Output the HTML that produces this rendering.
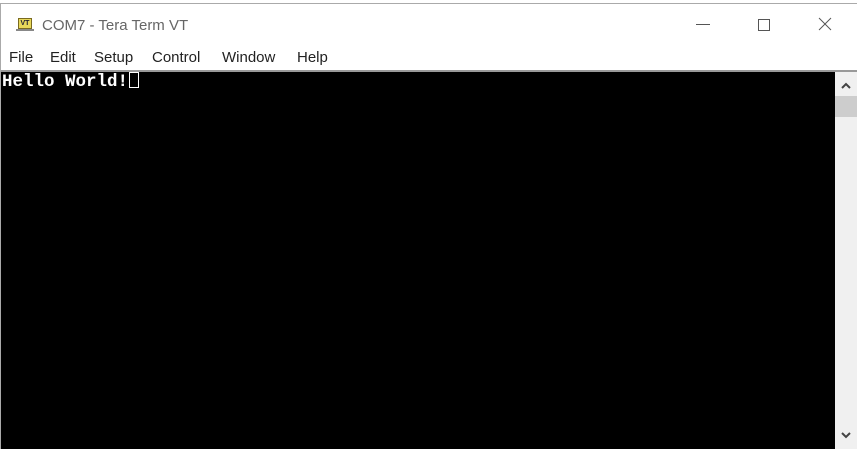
<!DOCTYPE html>
<html><head><style>
body{margin:0;width:857px;height:449px;background:#fff;position:relative;overflow:hidden;font-family:"Liberation Sans",sans-serif;}
.frame{position:absolute;left:0;top:3px;width:857px;height:446px;border-top:1px solid #aaa;border-left:1px solid #aaa;box-sizing:border-box;}
.title{position:absolute;left:42px;top:17px;font-size:15px;color:#666;}
.icon{position:absolute;left:18px;top:18px;width:14px;height:11px;background:#e8d85a;border:1px solid #7a6a20;box-sizing:border-box;font-size:7px;font-weight:bold;color:#223;line-height:9px;text-align:center;}
.iconbase{position:absolute;left:16px;top:29px;width:18px;height:2px;background:#888;}
.m{position:absolute;top:49px;font-size:15px;color:#222;}
.sep{position:absolute;left:1px;top:70px;width:856px;height:2px;background:#999;}
.term{position:absolute;left:1px;top:72px;width:834px;height:377px;background:#000;}
.txt{position:absolute;left:2px;top:72px;font-family:"Liberation Mono",monospace;font-weight:bold;font-size:17.5px;color:#fff;}
.cur{display:inline-block;width:8px;height:14px;border:1px solid #fff;vertical-align:-2px;margin-left:1px;}
.sb{position:absolute;left:835px;top:72px;width:22px;height:377px;background:#f0f0f0;}
.thumb{position:absolute;left:835px;top:96px;width:22px;height:21px;background:#cdcdcd;}
</style></head><body>
<div class="frame"></div>
<div class="icon">VT</div><div class="iconbase"></div>
<div class="title">COM7 - Tera Term VT</div>
<svg style="position:absolute;left:690px;top:14px" width="150" height="24">
<line x1="6" y1="10.5" x2="20" y2="10.5" stroke="#555" stroke-width="1"/>
<rect x="68.5" y="5.5" width="11" height="11" fill="none" stroke="#555"/>
<line x1="129" y1="4" x2="141" y2="16" stroke="#555"/><line x1="141" y1="4" x2="129" y2="16" stroke="#555"/>
</svg>
<div class="m" style="left:9px">File</div>
<div class="m" style="left:50px">Edit</div>
<div class="m" style="left:94px">Setup</div>
<div class="m" style="left:152px">Control</div>
<div class="m" style="left:222px">Window</div>
<div class="m" style="left:297px">Help</div>
<div class="sep"></div>
<div class="term"></div>
<div class="txt">Hello World!<span class="cur"></span></div>
<div class="sb"></div><div class="thumb"></div>
<svg style="position:absolute;left:835px;top:78px" width="22" height="14"><polyline points="7,10 11,6 15,10" fill="none" stroke="#444" stroke-width="2"/></svg>
<svg style="position:absolute;left:835px;top:428px" width="22" height="14"><polyline points="7,5 11,9 15,5" fill="none" stroke="#444" stroke-width="2"/></svg>
</body></html>
